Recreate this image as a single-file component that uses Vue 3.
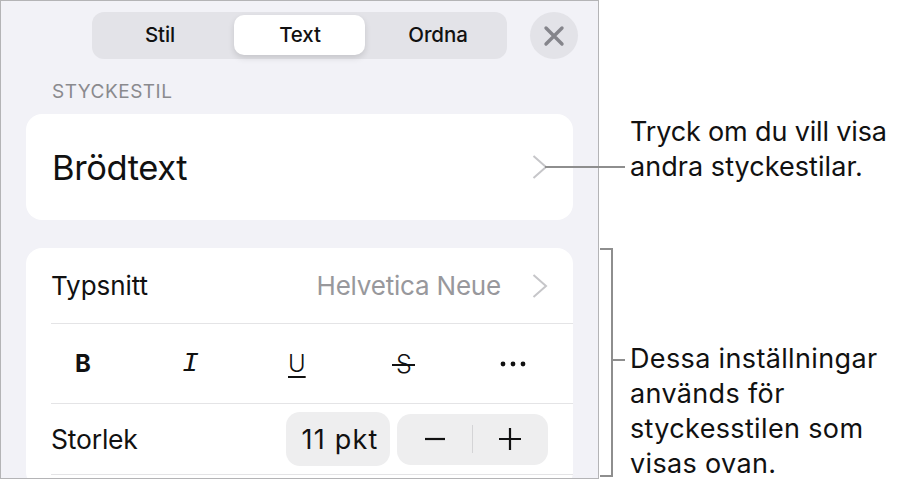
<script setup>
const segments = [
  { label: 'Stil', active: false, cls: 'stil' },
  { label: 'Text', active: true, cls: 'text' },
  { label: 'Ordna', active: false, cls: 'ordna' },
]
</script>

<template>
  <div class="page">
    <section class="panel">
      <header class="top">
        <div class="segmented">
          <div v-for="s in segments" :key="s.label" class="seg" :class="[s.cls, { active: s.active }]">{{ s.label }}</div>
        </div>
        <div class="close">
          <svg width="22" height="22" viewBox="0 0 22 22"><path d="M3 3L19 19M19 3L3 19" stroke="#85858b" stroke-width="3.4" stroke-linecap="round" fill="none"/></svg>
        </div>
      </header>
      <div class="label">STYCKESTIL</div>
      <div class="card style-card">
        <span class="style-name">Brödtext</span>
        <svg class="chev" width="16" height="26" viewBox="0 0 16 26"><path d="M1.5 2L14 13L1.5 24" stroke="#c6c6c9" stroke-width="2" fill="none"/></svg>
      </div>
      <div class="card font-card">
        <div class="row r1">
          <span>Typsnitt</span>
          <span class="value">Helvetica Neue</span>
          <svg class="chev" width="16" height="26" viewBox="0 0 16 26"><path d="M1.5 2L14 13L1.5 24" stroke="#c6c6c9" stroke-width="2" fill="none"/></svg>
        </div>
        <div class="row r2">
          <span class="fmt b">B</span>
          <span class="fmt i">I</span>
          <span class="fmt u">U</span>
          <span class="fmt s">S</span>
          <svg class="fmt dots" width="26" height="6" viewBox="0 0 26 6"><circle cx="3" cy="3" r="2.4"/><circle cx="13" cy="3" r="2.4"/><circle cx="23" cy="3" r="2.4"/></svg>
        </div>
        <div class="row r3">
          <span class="size-label">Storlek</span>
          <span class="pill">11 pkt</span>
          <div class="stepper">
            <svg width="22" height="22" viewBox="0 0 22 22"><path d="M1 11H21" stroke="#111" stroke-width="2.2"/></svg>
            <i class="sep"></i>
            <svg width="22" height="22" viewBox="0 0 22 22"><path d="M0 11H22M11 0V22" stroke="#111" stroke-width="2.2"/></svg>
          </div>
        </div>
      </div>
    </section>
    <aside class="notes">
      <p class="note n1"><span class="tight">Tryck om du vill visa</span><br>andra styckestilar.</p>
      <p class="note n2">Dessa inställningar<br>används för<br>styckesstilen som<br>visas ovan.</p>
    </aside>
    <i class="leader l1"></i>
    <i class="bracket"></i>
    <i class="leader l2"></i>
  </div>
</template>

<style>
html, body { margin: 0; background: #fff; }
</style>

<style scoped>
.page {
  position: relative;
  width: 899px;
  height: 484px;
  display: flex;
  overflow: hidden;
  font-family: Inter, "Liberation Sans", sans-serif;
  color: #111;
  background: #fff;
}
.panel {
  box-sizing: border-box;
  width: 599px;
  height: 479px;
  flex: none;
  overflow: hidden;
  background: #f2f2f7;
  border: 1px solid #b4b4b6;
  padding: 11px 25px 0 25px;
}
.top { display: flex; justify-content: flex-end; gap: 23px; margin-right: -5px; }
.segmented {
  width: 415px;
  height: 47px;
  box-sizing: border-box;
  background: #e3e3e8;
  border-radius: 12px;
  display: flex;
  padding: 3px 0 4px 0;
}
.seg {
  flex: none;
  display: flex;
  align-items: center;
  justify-content: center;
  padding-bottom: 1px;
  box-sizing: border-box;
  font-size: 20.5px;
  font-weight: 500;
  letter-spacing: -0.1px;
}
.stil { width: 136px; margin-right: 6px; }
.ordna { width: 146px; }
.seg.active {
  width: 131px;
  padding-left: 1px;
  background: #fff;
  border-radius: 10px;
  box-shadow: 0 3px 6px rgba(0,0,0,.13);
}
.close {
  width: 48px;
  height: 47px;
  border-radius: 50%;
  background: #e3e3e8;
  display: flex;
  align-items: center;
  justify-content: center;
}
.label {
  margin: 22px 0 0 26px;
  font-size: 19px;
  line-height: 21px;
  color: #8a8a8e;
  letter-spacing: 0.5px;
}
.card { background: #fff; border-radius: 16px; }
.style-card {
  margin-top: 12px;
  height: 106px;
  display: flex;
  align-items: center;
  justify-content: space-between;
  padding: 0 25px 0 26px;
}
.style-name { font-size: 34.5px; letter-spacing: -0.4px; }
.font-card { margin-top: 28px; height: 240px; padding-left: 25px; font-size: 26px; }
.row { display: flex; align-items: center; box-sizing: border-box; border-bottom: 1px solid #e4e4e6; }
.r1 { height: 76px; padding-right: 25px; letter-spacing: -0.05px; }
.value { margin-left: auto; margin-right: 31px; color: #98989c; letter-spacing: -0.2px; }
.r2 { height: 80px; font-size: 24px; position: relative; }
.fmt { position: absolute; }
.b { left: 24px; font-weight: 700; }
.i { left: 131px; font-family: "Liberation Mono", monospace; font-style: italic; font-size: 28px; }
.u { left: 237px; text-decoration: underline; text-decoration-thickness: 2px; text-underline-offset: 4px; font-weight: 300; }
.s { left: 345px; font-size: 25px; font-weight: 300; }
.s::after {
  content: "";
  position: absolute;
  left: -4px;
  right: -3px;
  top: 15px;
  height: 2px;
  background: #111;
}
.dots { left: 449px; fill: #111; }
.r3 { height: 71px; padding-right: 25px; }
.size-label { font-size: 26.5px; letter-spacing: -0.2px; }
.pill {
  margin-left: auto;
  width: 104px;
  height: 54px;
  box-sizing: border-box;
  padding-left: 4px;
  display: flex;
  align-items: center;
  justify-content: center;
  background: #eeeeef;
  border-radius: 14px;
  font-size: 27px;
  letter-spacing: 1.2px;
}
.stepper {
  margin-left: 7px;
  width: 151px;
  height: 51px;
  background: #eeeeef;
  border-radius: 14px;
  display: flex;
  align-items: center;
  justify-content: space-around;
  padding: 0 14px;
  box-sizing: border-box;
}
.sep { width: 1px; height: 28px; background: #d4d4d6; }
.notes {
  margin-left: 31px;
  display: flex;
  flex-direction: column;
}
.note {
  margin: 0;
  font-size: 27px;
  line-height: 35.3px;
  letter-spacing: 0.05px;
  color: #111;
  white-space: nowrap;
}
.tight { letter-spacing: -0.15px; }
.n1 { margin-top: 114px; }
.n2 { margin-top: 156px; letter-spacing: 0.35px; }
.leader { position: absolute; height: 2px; background: #8e8e8e; }
.l1 { left: 545px; top: 166px; width: 80px; }
.l2 { left: 612px; top: 359px; width: 13px; }
.bracket {
  position: absolute;
  left: 600px;
  top: 248px;
  width: 11px;
  height: 225px;
  border: 2px solid #8e8e8e;
  border-left: 0;
}
</style>
